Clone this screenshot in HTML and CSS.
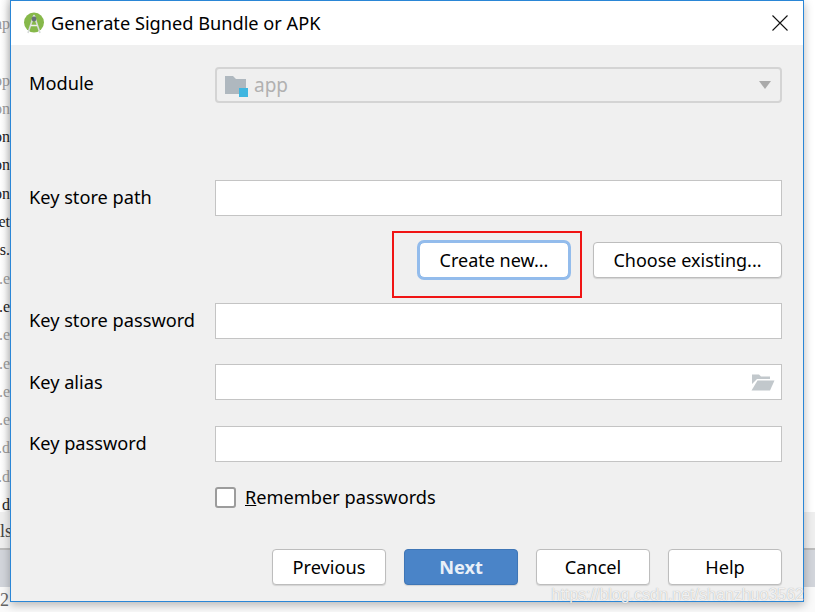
FILE: index.html
```html
<!DOCTYPE html>
<html lang="en">
<head>
    <meta charset="UTF-8">
    <meta name="viewport" content="width=device-width, initial-scale=1.0">
    <title>Generate Signed Bundle or APK</title>
    <link rel="stylesheet" href="styles.css">
</head>
<body>
    <div class="backdrop">
        <div class="code-lines">
            <div class="code-line faint">ap</div>
            <div class="code-line faint">&nbsp;</div>
            <div class="code-line faint">pp</div>
            <div class="code-line faint">on</div>
            <div class="code-line">on</div>
            <div class="code-line">on</div>
            <div class="code-line">on</div>
            <div class="code-line">et</div>
            <div class="code-line">s.</div>
            <div class="code-line faint">.e</div>
            <div class="code-line">.e</div>
            <div class="code-line faint">.e</div>
            <div class="code-line faint">.e</div>
            <div class="code-line faint">.e</div>
            <div class="code-line faint">.e</div>
            <div class="code-line faint">.d</div>
            <div class="code-line faint">.d</div>
            <div class="code-line">d</div>
        </div>
        <div class="tab-strip"><span>ls</span></div>
        <div class="status-strip"></div>
        <div class="bottom-strip"><span>2</span></div>
    </div>

    <div class="dialog">
        <div class="title-bar">
            <svg class="app-icon" width="22" height="22" viewBox="0 0 22 22">
                <circle cx="11" cy="10.5" r="10" fill="#86b84a"/>
                <path d="M11 3 L5 21 M11 3 L17 21" stroke="#d7dbd9" stroke-width="1.6" fill="none"/>
                <path d="M7.5 13.5 H14.5" stroke="#eef0ee" stroke-width="1.5"/>
                <circle cx="11" cy="7" r="2.4" fill="#66707a"/>
            </svg>
            <span class="title-text">Generate Signed Bundle or APK</span>
            <svg class="close-icon" width="16" height="16" viewBox="0 0 16 16">
                <path d="M0.5 0.5 L15.5 15.5 M15.5 0.5 L0.5 15.5" stroke="#111" stroke-width="1.1"/>
            </svg>
        </div>

        <div class="content">
            <div class="form-row module-row">
                <label>Module</label>
                <div class="field disabled">
                    <svg class="module-icon" width="24" height="22" viewBox="0 0 24 22">
                        <path d="M0 1 H8 L11 4 H21 V17 H14 V19 H0 Z" fill="#afb8bf"/>
                        <rect x="14" y="13" width="9" height="9" fill="#40b6e0"/>
                    </svg>
                    <span class="field-value">app</span>
                    <span class="dropdown-arrow"></span>
                </div>
            </div>

            <div class="form-row path-row">
                <label>Key store path</label>
                <div class="field"></div>
            </div>

            <div class="store-buttons">
                <div class="red-box"></div>
                <button class="btn btn-focus">Create new...</button>
                <button class="btn btn-choose">Choose existing...</button>
            </div>

            <div class="form-row password-row">
                <label>Key store password</label>
                <div class="field"></div>
            </div>

            <div class="form-row alias-row">
                <label>Key alias</label>
                <div class="field">
                    <svg class="folder-icon" width="24" height="17" viewBox="0 0 24 17">
                        <path d="M1 0.5 H8 L10 2.5 H19 V5 H6 L1 10 Z" fill="#c2c8cc"/>
                        <path d="M6.5 6.5 H23.5 L19 16.5 H0.5 Z" fill="#c2c8cc"/>
                    </svg>
                </div>
            </div>

            <div class="form-row key-password-row">
                <label>Key password</label>
                <div class="field"></div>
            </div>

            <div class="remember-row">
                <span class="checkbox"></span>
                <span class="remember-label"><u>R</u>emember passwords</span>
            </div>

            <div class="footer-buttons">
                <button class="btn footer-btn">Previous</button>
                <button class="btn footer-btn btn-primary">Next</button>
                <button class="btn footer-btn">Cancel</button>
                <button class="btn footer-btn">Help</button>
            </div>
        </div>
        <div class="watermark">https://blog.csdn.net/shanzhuo3562</div>
    </div>
</body>
</html>
```

FILE: styles.css
```css
html, body {
    margin: 0;
    padding: 0;
    height: 612px;
    overflow: hidden;
}

body {
    position: relative;
    width: 815px;
    background: #fff;
    font-family: "Noto Sans", "Open Sans", sans-serif;
    color: #000;
}

/* page behind the dialog */
.backdrop {
    position: absolute;
    inset: 0;
    overflow: hidden;
    background: #fff;
}

.code-lines {
    width: 10px;
    height: 512px;
    padding-top: 10px;
    box-sizing: border-box;
    overflow: hidden;
    background: linear-gradient(to right, #fff 0, #f8f8f8 5px, #e4e4e4 10px);
    font-family: "Liberation Serif", serif;
    font-size: 16px;
    line-height: 28.3px;
}

.code-line {
    display: flex;
    justify-content: flex-end;
    white-space: nowrap;
    color: #222;
}

.code-line.faint {
    color: #999;
}

.tab-strip {
    height: 36px;
    background: #efefef;
    font-family: "Liberation Serif", serif;
    font-size: 18px;
    line-height: 38px;
    color: #444;
    overflow: hidden;
}

.status-strip {
    height: 39px;
    background: #d2d5db;
    border-top: 2px solid #bcbcbc;
    box-sizing: border-box;
}

.bottom-strip {
    height: 25px;
    background: #fafafa;
    font-family: "Liberation Serif", serif;
    font-size: 18px;
    line-height: 26px;
    color: #666;
}

.dialog {
    position: absolute;
    left: 10px;
    top: 0;
    width: 794px;
    height: 602px;
    box-sizing: border-box;
    border: 1px solid #2a86d6;
    background: #f0f0f0;
    box-shadow: 0 3px 9px rgba(0, 0, 0, 0.28);
}

.title-bar {
    display: flex;
    align-items: center;
    height: 44px;
    padding: 0 15px 0 12px;
    background: #fff;
}

.app-icon {
    margin-right: 6px;
}

.title-text {
    flex: 1;
    font-size: 18.2px;
    color: #000;
}

.content {
    padding: 22px 21px 0 18px;
}

.form-row {
    display: flex;
    align-items: center;
    height: 36px;
}

.form-row label {
    width: 186px;
    font-size: 18.2px;
    color: #000;
    margin-top: -2px;
}

.module-row label {
    margin-top: -4px;
}

.alias-row label {
    margin-top: 0;
}

.field {
    position: relative;
    display: flex;
    align-items: center;
    flex: 1;
    height: 36px;
    box-sizing: border-box;
    border: 1px solid #c4c4c4;
    background: #fff;
}

.field.disabled {
    background: #efefef;
    border: 2px solid #d4d4d4;
    border-radius: 4px;
    padding-left: 8px;
}

.module-icon {
    margin-top: 1px;
}

.field-value {
    margin-left: 5px;
    font-size: 19px;
    color: #b1b1b1;
}

.dropdown-arrow {
    margin-left: auto;
    margin-right: 9px;
    border-left: 6.5px solid transparent;
    border-right: 6.5px solid transparent;
    border-top: 8px solid #aaa;
}

.folder-icon {
    margin-left: auto;
    margin-right: 6px;
}

.path-row {
    margin-top: 77px;
}

.store-buttons {
    position: relative;
    display: flex;
    justify-content: flex-end;
    gap: 24px;
    height: 36px;
    margin-top: 26px;
}

.red-box {
    position: absolute;
    left: 363px;
    top: -11px;
    width: 190px;
    height: 67px;
    box-sizing: border-box;
    border: 2px solid #f01414;
}

.btn {
    height: 36px;
    box-sizing: border-box;
    padding: 0;
    border: 1px solid #bdbdbd;
    border-radius: 4px;
    background: #fff;
    font-family: inherit;
    font-size: 18.2px;
    color: #000;
    box-shadow: 0 1px 1px rgba(0, 0, 0, 0.12);
}

.store-buttons .btn {
    font-size: 18px;
}

.btn-focus {
    position: relative;
    width: 150px;
    border-color: #84b3e6;
    outline: 3px solid #93bcec;
    outline-offset: -1px;
    border-radius: 5px;
}

.btn-choose {
    width: 189px;
}

.password-row {
    margin-top: 25px;
}

.alias-row {
    margin-top: 25px;
}

.key-password-row {
    margin-top: 26px;
}

.remember-row {
    display: flex;
    align-items: center;
    height: 22px;
    margin-top: 24px;
    margin-left: 186px;
}

.checkbox {
    width: 21px;
    height: 21px;
    box-sizing: border-box;
    border: 2px solid #9c9c9c;
    border-radius: 3px;
    background: #fff;
    margin-right: 9px;
}

.remember-label {
    font-size: 18.2px;
    color: #000;
}

.footer-buttons {
    display: flex;
    justify-content: flex-end;
    gap: 18px;
    margin-top: 41px;
}

.footer-btn {
    width: 114px;
}

.btn-primary {
    border-color: #3f76b6;
    background: #4a84c8;
    color: #e9f0f8;
    font-weight: 700;
}

.watermark {
    position: absolute;
    right: -1px;
    bottom: -3px;
    font-family: "Liberation Sans", sans-serif;
    font-size: 16px;
    color: rgba(255, 255, 255, 0.85);
    text-shadow: 0 0 1px rgba(120, 120, 120, 0.7);
    white-space: nowrap;
}
```
